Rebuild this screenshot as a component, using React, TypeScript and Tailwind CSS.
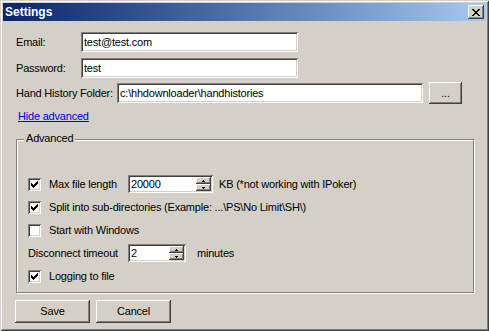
import React from "react";

const font = { fontFamily: '"Liberation Sans", Arial, sans-serif' };

const sunken =
  "shadow-[inset_1px_1px_0_#808080,inset_-1px_-1px_0_#ffffff,inset_2px_2px_0_#404040,inset_-2px_-2px_0_#d4d0c8]";
const raised =
  "shadow-[inset_-1px_-1px_0_#404040,inset_1px_1px_0_#ffffff,inset_-2px_-2px_0_#808080,inset_2px_2px_0_#d4d0c8]";

function Pixels({ rows, w, h }: { rows: string[]; w: number; h: number }) {
  const rects: React.ReactNode[] = [];
  rows.forEach((r, y) =>
    r.split("").forEach((c, x) => {
      if (c === "X") rects.push(<rect key={`${x}-${y}`} x={x} y={y} width={1} height={1} fill="#000" />);
    })
  );
  return (
    <svg width={w} height={h} viewBox={`0 0 ${w} ${h}`} shapeRendering="crispEdges">
      {rects}
    </svg>
  );
}

const CHECK = ["......X", ".....XX", "X...XXX", "XX.XXX.", "XXXXX..", ".XXX...", "..X...."];
const CLOSE = ["XX....XX", ".XX..XX.", "..XXXX..", "...XX...", "..XXXX..", ".XX..XX.", "XX....XX"];
const UP = ["..X..", ".XXX."];
const DOWN = [".XXX.", "..X.."];

function Checkbox({ checked, label }: { checked: boolean; label: string }) {
  return (
    <div className="flex items-center h-[18px]">
      <div className={`w-[13px] h-[13px] bg-white flex items-center justify-center ${sunken}`}>
        {checked && <Pixels rows={CHECK} w={7} h={7} />}
      </div>
      <span className="ml-[8px]">{label}</span>
    </div>
  );
}

function Spinner({ value, width }: { value: string; width: string }) {
  return (
    <div className={`${width} h-[18px] bg-white flex p-[2px] ${sunken}`}>
      <input
        defaultValue={value}
        className="flex-1 min-w-0 bg-transparent outline-none pl-[1px] text-[11px] tracking-[-0.2px] text-black"
        style={font}
      />
      <div className="w-[15px] flex flex-col">
        <div className={`h-[7px] bg-[#d4d0c8] flex items-center justify-center ${raised}`}>
          <Pixels rows={UP} w={5} h={2} />
        </div>
        <div className={`h-[7px] bg-[#d4d0c8] flex items-center justify-center ${raised}`}>
          <Pixels rows={DOWN} w={5} h={2} />
        </div>
      </div>
    </div>
  );
}

function TextField({ value, width }: { value: string; width: string }) {
  return (
    <div className={`${width} h-[20px] bg-white flex items-center px-[3px] ${sunken}`}>
      <input
        defaultValue={value}
        className="w-full bg-transparent outline-none text-[11px] tracking-[-0.2px] text-black"
        style={font}
      />
    </div>
  );
}

export default function App() {
  return (
    <div
      className="w-[489px] h-[331px] bg-[#d4d0c8] p-[3px] flex flex-col text-[11px] tracking-[-0.2px] text-black shadow-[inset_1px_1px_0_#d4d0c8,inset_-1px_-1px_0_#404040,inset_2px_2px_0_#ffffff,inset_-2px_-2px_0_#808080] select-none"
      style={font}
    >
      {/* Title bar */}
      <div className="h-[18px] flex items-center justify-between pl-[2px] pr-[2px] bg-gradient-to-r from-[#0a246a] to-[#a6caf0]">
        <span className="text-white font-bold text-[12px] tracking-normal">Settings</span>
        <div className={`w-[16px] h-[14px] bg-[#d4d0c8] flex items-center justify-center ${raised}`}>
          <Pixels rows={CLOSE} w={8} h={7} />
        </div>
      </div>

      <div className="flex flex-col pl-[13px] pt-[11px]">
        <div className="flex items-center h-[20px]">
          <span className="w-[65px]">Email:</span>
          <TextField value="test@test.com" width="w-[217px]" />
        </div>
        <div className="flex items-center h-[20px] mt-[6px]">
          <span className="w-[65px]">Password:</span>
          <TextField value="test" width="w-[217px]" />
        </div>
        <div className="flex items-center h-[22px] mt-[4px]">
          <span className="w-[101px]">Hand History Folder:</span>
          <TextField value="c:\hhdownloader\handhistories" width="w-[306px]" />
          <button className={`ml-[6px] w-[33px] h-[22px] bg-[#d4d0c8] flex items-center justify-center ${raised}`}>
            ...
          </button>
        </div>
        <div className="mt-[6px] h-[13px] leading-[13px] pl-[2px]">
          <span className="text-[#0000dd] underline">Hide advanced</span>
        </div>

        {/* Advanced group */}
        <div className="relative mt-[16px] w-[458px] h-[154px] border border-[#808080] shadow-[inset_1px_1px_0_#ffffff,1px_1px_0_#ffffff] pl-[11px] pt-[35px]">
          <span className="absolute left-[7px] top-[-8px] px-[2px] h-[13px] leading-[13px] bg-[#d4d0c8]">
            Advanced
          </span>
          <div className="flex flex-col gap-[5px]">
            <div className="flex items-center h-[18px]">
              <div className="w-[100px]">
                <Checkbox checked label="Max file length" />
              </div>
              <Spinner value="20000" width="w-[85px]" />
              <span className="ml-[6px]">KB (*not working with IPoker)</span>
            </div>
            <Checkbox checked label="Split into sub-directories (Example: ...\PS\No Limit\SH\)" />
            <Checkbox checked={false} label="Start with Windows" />
            <div className="flex items-center h-[18px]">
              <span className="w-[100px]">Disconnect timeout</span>
              <Spinner value="2" width="w-[58px]" />
              <span className="ml-[11px]">minutes</span>
            </div>
            <Checkbox checked label="Logging to file" />
          </div>
        </div>

        <div className="flex gap-[6px] mt-[7px] -ml-[1px]">
          <button className={`w-[75px] h-[23px] bg-[#d4d0c8] ${raised}`}>Save</button>
          <button className={`w-[75px] h-[23px] bg-[#d4d0c8] ${raised}`}>Cancel</button>
        </div>
      </div>
    </div>
  );
}
